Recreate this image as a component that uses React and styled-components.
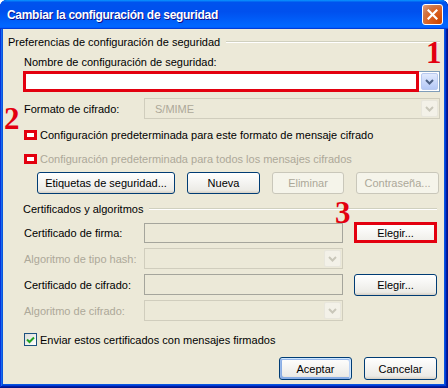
import styled, { createGlobalStyle } from 'styled-components';

const GlobalStyle = createGlobalStyle`
  html, body {
    margin: 0;
    padding: 0;
    background: #ffffff;
  }
  body {
    width: 448px;
    height: 388px;
    overflow: hidden;
    font-family: "Liberation Sans", Arial, sans-serif;
    font-size: 11px;
    color: #000;
  }
`;

const Window = styled.div`
  position: relative;
  width: 448px;
  height: 388px;
  box-sizing: border-box;
  display: flex;
  flex-direction: column;
  padding: 0 4px 4px 3px;
  background: #0855dd;
  border-radius: 7px 7px 0 0;
  box-shadow: inset -1px -1px #00138c, inset 1px 1px #0831d9, inset -2px -2px #001ea0,
    inset 2px 2px #166aee, inset -3px -3px #003bda, inset 3px 3px #0855dd;
`;

const TitleBar = styled.div`
  height: 29px;
  margin: 0 -4px 0 -3px;
  padding: 0 5px 0 7px;
  display: flex;
  align-items: center;
  justify-content: space-between;
  border-radius: 7px 7px 0 0;
  background: linear-gradient(
    180deg,
    #0997ff,
    #0053ee 8%,
    #0050ee 40%,
    #06f 88%,
    #06f 93%,
    #005bff 95%,
    #003dd7 96%,
    #003dd7
  );
`;

const Title = styled.span`
  color: #fff;
  font-weight: bold;
  font-size: 12px;
  letter-spacing: -0.3px;
  text-shadow: 1px 1px #0f1089;
`;

const CloseButton = styled.div`
  width: 21px;
  height: 21px;
  box-sizing: border-box;
  border: 1px solid #fff;
  border-radius: 3px;
  display: flex;
  align-items: center;
  justify-content: center;
  background: radial-gradient(circle at 90% 90%, #cc4600 0%, #dc6527 55%, #cd7546 70%, #e79f7f 100%);
`;

const Body = styled.div`
  flex: 1;
  display: flex;
  flex-direction: column;
  background: #ece9d8;
  padding-top: 6px;
`;

const GroupHeader = styled.div`
  display: flex;
  align-items: center;
  gap: 6px;
  height: 14px;
  margin: ${(p) => p.$mt}px ${(p) => p.$mr}px 0 ${(p) => p.$ml}px;
`;

const GroupLine = styled.div`
  flex: 1;
  height: 0;
  border-top: 1px solid #d0d0bf;
  border-bottom: 1px solid #fff;
`;

const Text = styled.span`
  color: ${(p) => (p.$disabled ? '#aca899' : '#000')};
  white-space: nowrap;
  line-height: 14px;
`;

const Block = styled.div`
  margin: ${(p) => p.$mt || 0}px 4px 0 ${(p) => p.$ml}px;
`;

const FieldRow = styled.div`
  display: grid;
  grid-template-columns: 120px 1fr;
  align-items: center;
  height: 21px;
  margin: ${(p) => p.$mt}px 4px 0 21px;
`;

const Combo = styled.div`
  display: flex;
  align-items: center;
  box-sizing: border-box;
  height: 21px;
  border: 1px solid ${(p) => (p.$disabled ? '#d0cdbd' : '#7f9db9')};
  background: ${(p) => (p.$disabled ? '#ece9d8' : '#fff')};
  padding: 1px;
`;

const ComboValue = styled.div`
  flex: 1;
  align-self: stretch;
  box-sizing: border-box;
  display: flex;
  align-items: center;
  padding-left: 9px;
  color: #aca899;
  border: ${(p) => (p.$highlight ? '3px solid #e3000f' : 'none')};
  margin: ${(p) => (p.$highlight ? '-2px 2px -2px -2px' : '0')};
`;

const ArrowButton = styled.div`
  width: 15px;
  height: 15px;
  border-radius: 2px;
  display: flex;
  align-items: center;
  justify-content: center;
  border: 1px solid ${(p) => (p.$disabled ? '#e8e6dc' : '#b9caef')};
  background: ${(p) =>
    p.$disabled ? '#f3f1e8' : 'linear-gradient(180deg, #e1eafe, #b4c8f6)'};
`;

const CheckRow = styled.div`
  display: flex;
  align-items: center;
  gap: 2px;
  height: 15px;
  margin: ${(p) => p.$mt}px 4px 0 21px;
`;

const CheckBox = styled.div`
  box-sizing: border-box;
  width: 13px;
  height: ${(p) => (p.$highlight ? 10 : 13)}px;
  margin-right: 1px;
  display: flex;
  align-items: center;
  justify-content: center;
  border: ${(p) => (p.$highlight ? '3px solid #e3000f' : '1px solid #1c5180')};
  background: ${(p) => (p.$highlight ? '#fff' : 'linear-gradient(135deg, #dcdcd7, #fff)')};
`;

const ButtonRow = styled.div`
  display: flex;
  justify-content: ${(p) => (p.$end ? 'flex-end' : 'flex-start')};
  gap: ${(p) => p.$gap}px;
  margin: ${(p) => p.$mt}px ${(p) => p.$mr || 0}px 0 ${(p) => p.$ml || 0}px;
`;

const Button = styled.button`
  box-sizing: border-box;
  width: ${(p) => p.$w}px;
  height: ${(p) => p.$h || 22}px;
  padding: 0;
  justify-self: end;
  font-family: inherit;
  font-size: 11px;
  color: ${(p) => (p.disabled ? '#aca899' : '#000')};
  border: ${(p) =>
    p.$highlight ? '3px solid #e3000f' : p.disabled ? '1px solid #c9c7ba' : '1px solid #003c74'};
  border-radius: ${(p) => (p.$highlight ? 0 : 3)}px;
  background: ${(p) =>
    p.disabled
      ? '#f5f4ea'
      : p.$highlight
      ? 'linear-gradient(180deg, #fff, #f0efea)'
      : 'linear-gradient(180deg, #fff, #ecebe6 86%, #d6d0c5)'};
  box-shadow: ${(p) =>
    p.$default
      ? 'inset -1px 1px #cee7ff, inset 1px 2px #98b8ea, inset -2px 2px #bcd4f6, inset 1px -1px #89ade4, inset 2px -2px #89ade4'
      : 'none'};
`;

const CertGrid = styled.div`
  display: grid;
  grid-template-columns: 120px 199px 94px;
  grid-auto-rows: 21px;
  row-gap: 5px;
  align-items: center;
  margin: 6px 0 0 21px;
`;

const ReadField = styled.div`
  box-sizing: border-box;
  height: ${(p) => p.$h || 20}px;
  border: 1px solid #a5a59c;
  background: #ece9d8;
`;

const Annotation = styled.span`
  position: absolute;
  left: ${(p) => p.$x}px;
  top: ${(p) => p.$y}px;
  font-family: "Liberation Serif", "Times New Roman", serif;
  font-weight: bold;
  font-size: 31px;
  line-height: 1;
  color: #e3000f;
`;

const Chevron = ({ disabled }) => (
  <svg width="9" height="6" viewBox="0 0 9 6">
    <path
      d="M1 1 L4.5 4.5 L8 1"
      fill="none"
      stroke={disabled ? '#c9c7ba' : '#4d6185'}
      strokeWidth="2"
    />
  </svg>
);

const CloseX = () => (
  <svg width="11" height="11" viewBox="0 0 11 11">
    <path d="M1.5 1.5 L9.5 9.5 M9.5 1.5 L1.5 9.5" stroke="#fff" strokeWidth="2.2" strokeLinecap="square" />
  </svg>
);

const Check = () => (
  <svg width="9" height="8" viewBox="0 0 9 8">
    <path d="M1 3.5 L3.5 6 L8 1.5" fill="none" stroke="#21a121" strokeWidth="2" />
  </svg>
);

function App() {
  return (
    <>
      <GlobalStyle />
      <Window>
        <TitleBar>
          <Title>Cambiar la configuración de seguridad</Title>
          <CloseButton>
            <CloseX />
          </CloseButton>
        </TitleBar>

        <Body>
          <GroupHeader $mt={0} $ml={5} $mr={4}>
            <Text>Preferencias de configuración de seguridad</Text>
            <GroupLine />
          </GroupHeader>

          <Block $mt={6} $ml={21}>
            <Text>Nombre de configuración de seguridad:</Text>
          </Block>
          <Block $mt={2} $ml={20}>
            <Combo>
              <ComboValue $highlight />
              <ArrowButton>
                <Chevron />
              </ArrowButton>
            </Combo>
          </Block>

          <FieldRow $mt={6}>
            <Text>Formato de cifrado:</Text>
            <Combo $disabled>
              <ComboValue>S/MIME</ComboValue>
              <ArrowButton $disabled>
                <Chevron disabled />
              </ArrowButton>
            </Combo>
          </FieldRow>

          <CheckRow $mt={8}>
            <CheckBox $highlight />
            <Text>Configuración predeterminada para este formato de mensaje cifrado</Text>
          </CheckRow>
          <CheckRow $mt={9}>
            <CheckBox $highlight />
            <Text $disabled>Configuración predeterminada para todos los mensajes cifrados</Text>
          </CheckRow>

          <ButtonRow $mt={6} $ml={34} $gap={12}>
            <Button $w={138}>Etiquetas de seguridad...</Button>
            <Button $w={73}>Nueva</Button>
            <Button $w={72} disabled>
              Eliminar
            </Button>
            <Button $w={83} disabled>
              Contraseña...
            </Button>
          </ButtonRow>

          <GroupHeader $mt={8} $ml={20} $mr={7}>
            <Text>Certificados y algoritmos</Text>
            <GroupLine />
          </GroupHeader>

          <CertGrid>
            <Text>Certificado de firma:</Text>
            <ReadField />
            <Button $w={83} $h={21} $highlight>
              Elegir...
            </Button>

            <Text $disabled>Algoritmo de tipo hash:</Text>
            <Combo $disabled>
              <ComboValue />
              <ArrowButton $disabled>
                <Chevron disabled />
              </ArrowButton>
            </Combo>
            <span />

            <Text>Certificado de cifrado:</Text>
            <ReadField $h={21} />
            <Button $w={83} $h={22}>
              Elegir...
            </Button>

            <Text $disabled>Algoritmo de cifrado:</Text>
            <Combo $disabled>
              <ComboValue />
              <ArrowButton $disabled>
                <Chevron disabled />
              </ArrowButton>
            </Combo>
            <span />
          </CertGrid>

          <CheckRow $mt={11}>
            <CheckBox>
              <Check />
            </CheckBox>
            <Text>Enviar estos certificados con mensajes firmados</Text>
          </CheckRow>

          <ButtonRow $mt={10} $mr={7} $gap={12} $end>
            <Button $w={73} $h={23} $default>
              Aceptar
            </Button>
            <Button $w={73} $h={23}>
              Cancelar
            </Button>
          </ButtonRow>
        </Body>

        <Annotation $x={426} $y={37}>1</Annotation>
        <Annotation $x={4} $y={103}>2</Annotation>
        <Annotation $x={335} $y={197}>3</Annotation>
      </Window>
    </>
  );
}

export default App;
